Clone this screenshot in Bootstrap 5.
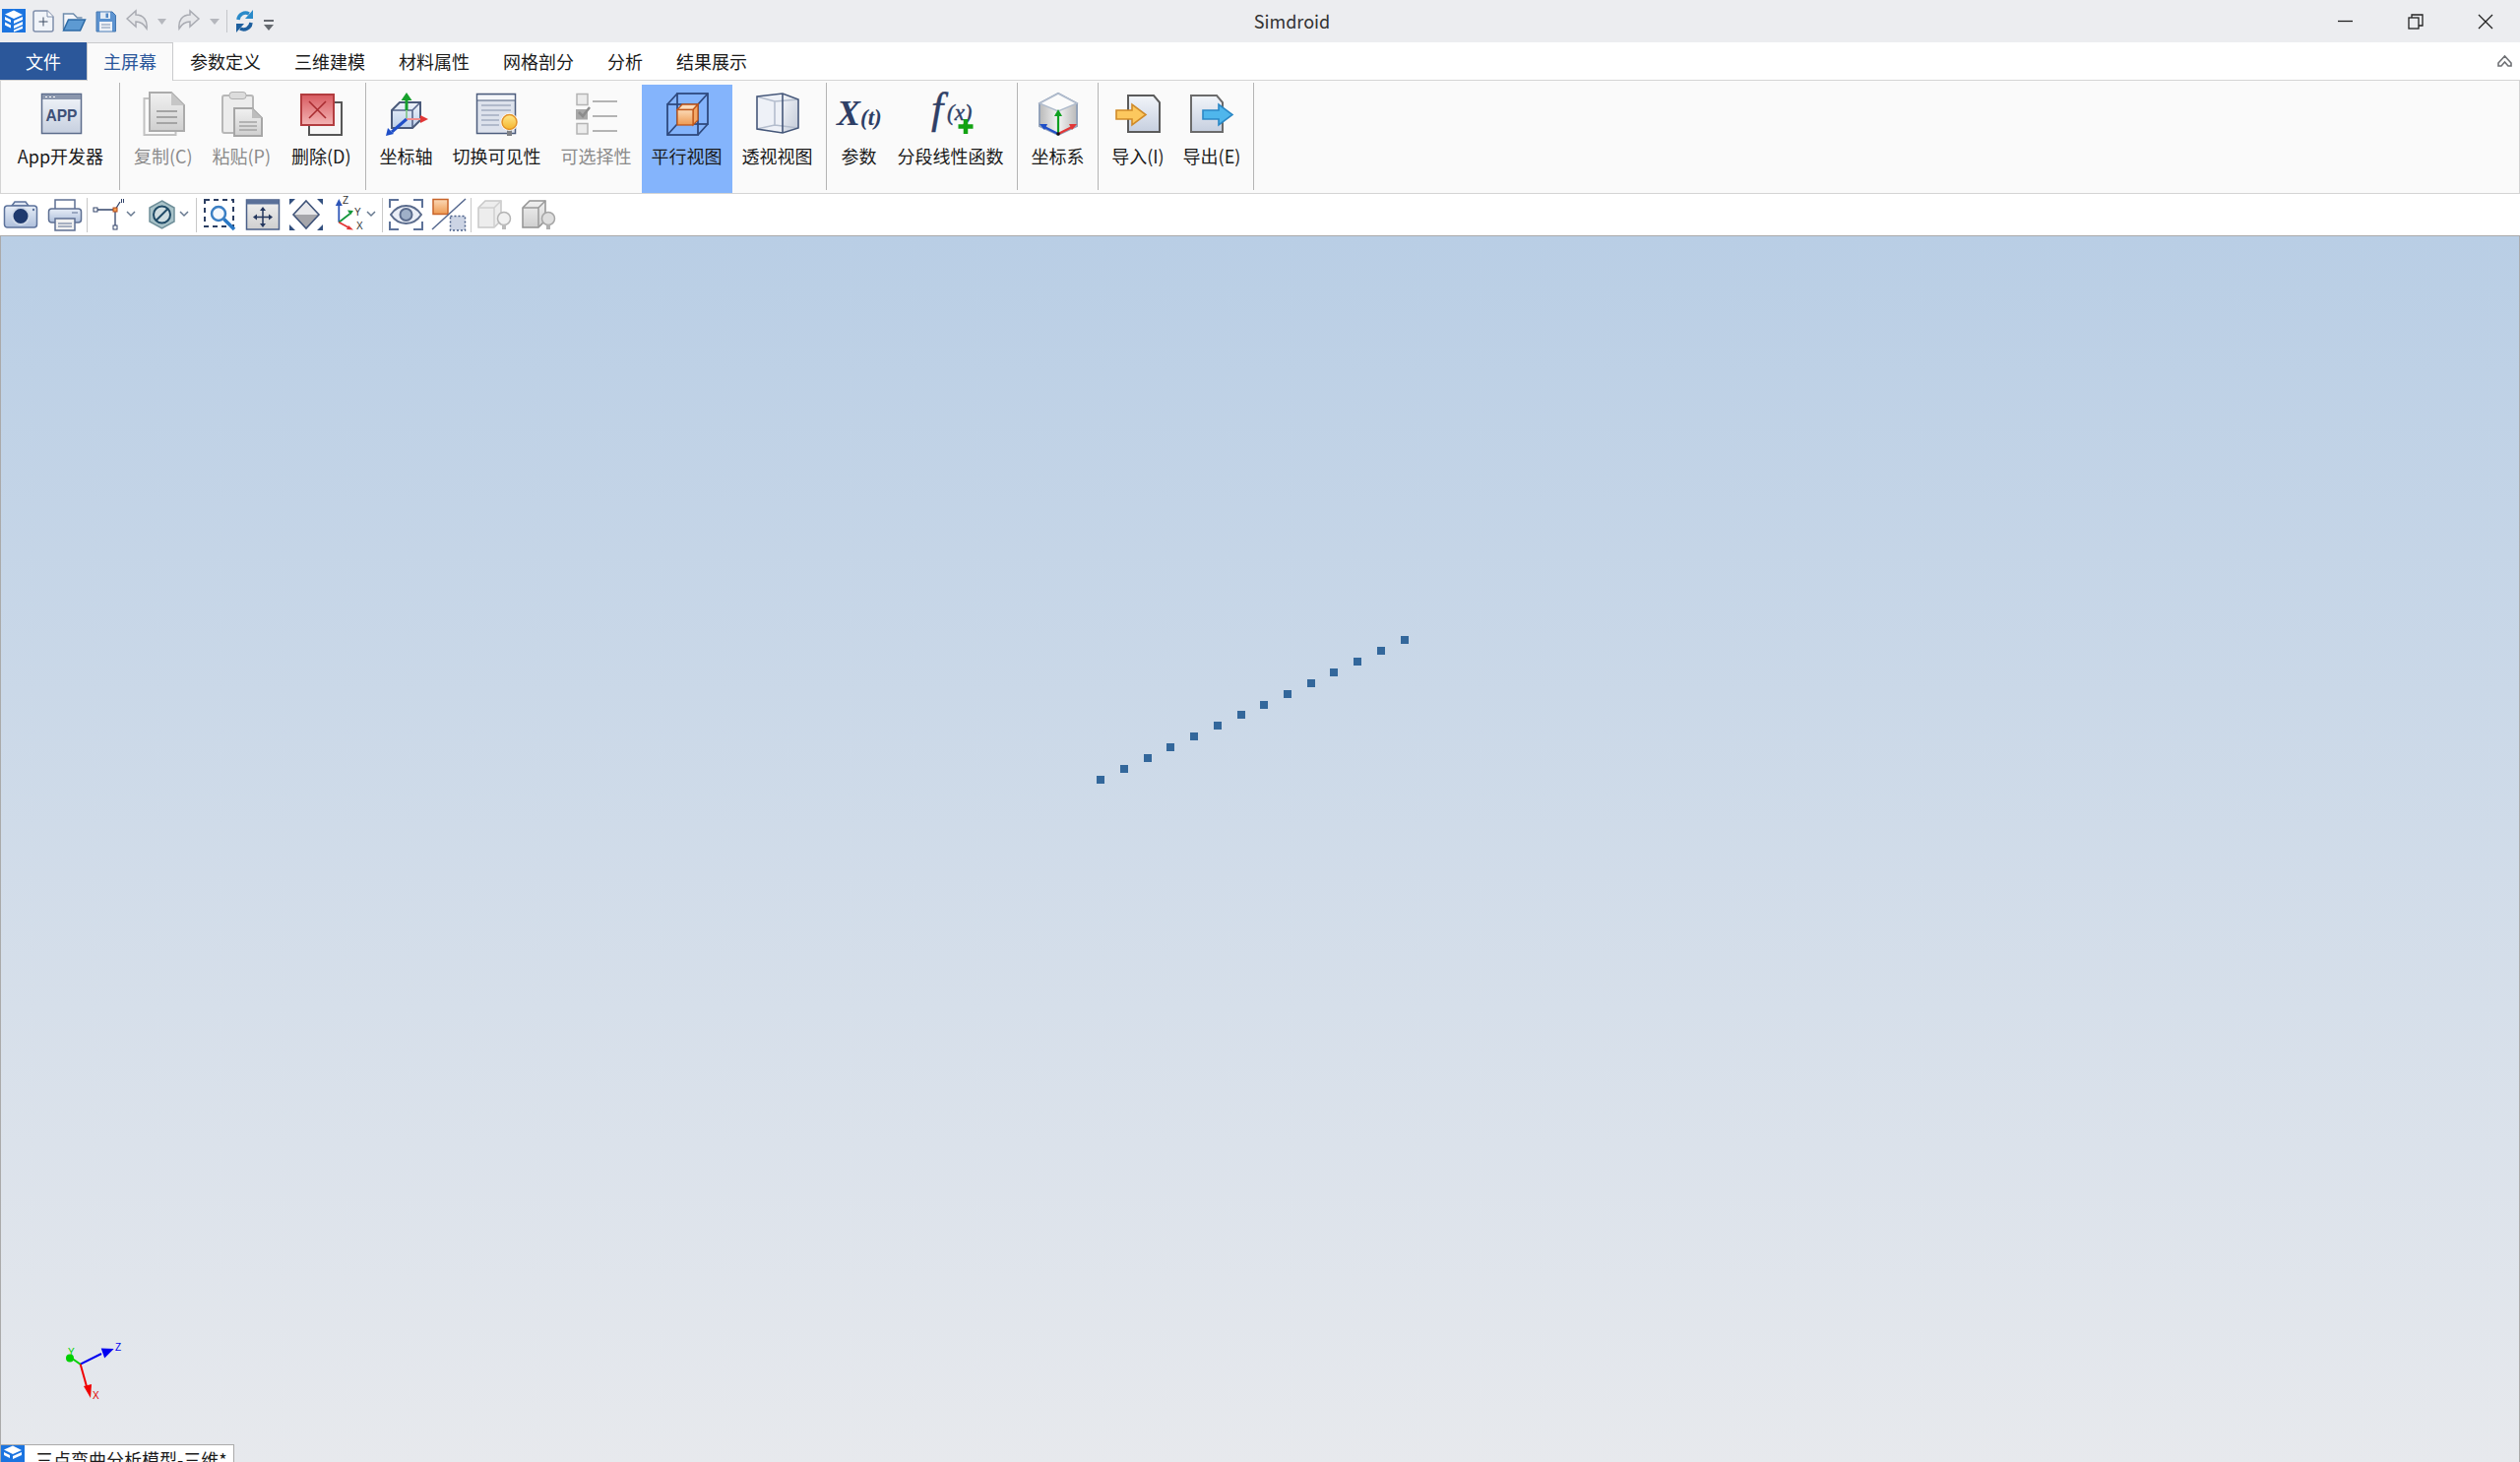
<!DOCTYPE html>
<html lang="zh-CN">
<head>
<meta charset="UTF-8" />
<title>Simdroid</title>
<link href="https://cdn.jsdelivr.net/npm/bootstrap@5.3.0/dist/css/bootstrap.min.css" rel="stylesheet" />
<style>
  html, body { height: 100%; }
  body { font-family: "Noto Sans CJK SC", "Noto Sans", sans-serif; font-size: 18px; color: #1a1a1a; overflow: hidden; background: #fff; }
  svg { display: block; flex: none; }
  .svg-defs { position: absolute; width: 0; height: 0; }

  .title-row { height: 43px; background: #ecedf0; }
  .title-text { line-height: 43px; font-size: 18px; color: #333; }
  .qa-sep { width: 1px; height: 23px; margin: 10px 8px 0 7px; background: #c4c6ca; }
  .win-btn { width: 71px; height: 43px; padding: 0; border: 0; border-radius: 0; }

  .tab-row { height: 38px; background: #fff; position: relative; z-index: 1; }
  .rb-tab .nav-link { height: 39px; line-height: 38px; padding: 0 17px; font-size: 18px; color: #1a1a1a; border: 1px solid transparent; border-width: 0 1px; margin: 0 -1px; }
  .rb-tab .nav-link.file-tab { width: 88px; padding: 0; margin: 0; border: 0; height: 38px; text-align: center; background: #2b579a; color: #fff; }
  .rb-tab .nav-link.active { background: #fafafa; color: #2b579a; border: 1px solid #c9cacc; border-bottom: 0; margin: 0; padding: 0 16px; height: 39px; line-height: 36px; }

  .rb-panel { height: 116px; padding: 4px 0 0 4px; background: #fafafa; border: 1px solid #d4d4d4; }
  .rb-sep { width: 1px; margin: -2px 4px 3px 3px; background: #b4b4b4; }
  .rb-btn { padding: 6px 10px 0; border: 0; border-radius: 0; font-size: 18px; line-height: 24px; color: #1a1a1a; white-space: nowrap; }
  .rb-btn svg { overflow: visible; }
  .rb-btn span { margin-top: 6px; }
  .rb-btn.rb-off { color: #8b8b8b; }
  .rb-btn.active { background: #84b4fc; color: #1a1a1a; }
  .rb-w113 { width: 113px; padding-left: 0; padding-right: 0; }
  .rb-w80 { width: 79.5px; padding-left: 0; padding-right: 0; }
  .rb-w82 { width: 82.5px; padding-left: 0; padding-right: 0; }
  .rb-w73 { width: 73px; padding-left: 0; padding-right: 0; }
  .rb-w77 { width: 77px; padding-left: 0; padding-right: 0; }
  .rb-w58 { width: 58px; padding-left: 0; padding-right: 0; }

  .tool-row { height: 42px; margin-left: -1px; background: #fff; }
  .tb-btn { width: 44.5px; height: 42px; padding: 0; border: 0; border-radius: 0; }
  .tb-drop { width: 55px; }
  .tb-drop2 { width: 54.5px; }
  .tb-sep { width: 1px; height: 35px; margin-top: 4px; background: #c8c8c8; }

  .view-area { position: relative; background: linear-gradient(#b9cee5, #e7e9ed); border: 1px solid #aaa; border-width: 1px 1px 0; }
  .view-dots { position: absolute; left: 1089px; top: 390px; }
  .view-triad { position: absolute; left: -1px; top: 1100px; }
  .doc-tab { width: 237px; height: 18px; overflow: hidden; background: #fff; border: 1px solid #aaa; border-bottom: 0; border-left: 0; line-height: 28px; white-space: nowrap; }
  .doc-tab svg { margin-top: -1px; }
  .doc-tab span { margin-left: 11px; }
</style>
</head>
<body class="d-flex flex-column">

<svg class="svg-defs">
  <defs>
    <linearGradient id="gLight" x1="0" y1="0" x2="0" y2="1"><stop offset="0" stop-color="#f2f5fa"/><stop offset="1" stop-color="#c6cfdf"/></linearGradient>
    <linearGradient id="gSide" x1="0" y1="0" x2="1" y2="1"><stop offset="0" stop-color="#f4f6fa"/><stop offset="1" stop-color="#c2cad8"/></linearGradient>
    <linearGradient id="gGray" x1="0" y1="0" x2="0" y2="1"><stop offset="0" stop-color="#f1f1f1"/><stop offset="1" stop-color="#cfcfcf"/></linearGradient>
    <linearGradient id="gRed" x1="0" y1="0" x2="0" y2="1"><stop offset="0" stop-color="#d85a60"/><stop offset="1" stop-color="#f3b4b4"/></linearGradient>
    <linearGradient id="gBulb" x1="0" y1="0" x2="0" y2="1"><stop offset="0" stop-color="#ffe88a"/><stop offset="1" stop-color="#f4b52e"/></linearGradient>
    <linearGradient id="gOrange" x1="0" y1="0" x2="0" y2="1"><stop offset="0" stop-color="#fbd9b6"/><stop offset="1" stop-color="#ee9a52"/></linearGradient>
    <linearGradient id="gCam" x1="0" y1="0" x2="0" y2="1"><stop offset="0" stop-color="#e6edf7"/><stop offset="1" stop-color="#aebfdb"/></linearGradient>
    <linearGradient id="gCube" x1="0" y1="0" x2="1" y2="0"><stop offset="0" stop-color="#b9b9b9"/><stop offset=".5" stop-color="#f4f4f4"/><stop offset="1" stop-color="#b9b9b9"/></linearGradient>
    <linearGradient id="gBox" x1="0" y1="0" x2="0" y2="1"><stop offset="0" stop-color="#eef3fa"/><stop offset="1" stop-color="#bcd0ea"/></linearGradient>
  </defs>
</svg>

<!-- title bar -->
<div class="title-row d-flex flex-none">
  <div class="d-flex">
    <svg width="33" height="43"><rect x="2" y="9" width="24" height="24" fill="#1b74e0"/><path d="M5 14.500L14 10.500l9 4.500-9 4zM14 21l9-4v3l-9 4zM14 26l9-4v3l-9 4zM14 30.500l9-4v2.500l-9 3.500zM5 17l6 3v3l-6-3zM5 22.500l6 3v3l-6-3z" fill="#fff"/></svg>
    <svg width="30" height="43"><path d="M1 13a2 2 0 0 1 2-2h12l6 6v13a2 2 0 0 1-2 2H3a2 2 0 0 1-2-2z" fill="#f1f4f9" stroke="#7f8eab" stroke-width="1.500"/><path d="M15 11v6h6" fill="#fff" stroke="#7f8eab"/><path d="M11 17.500v9M6.500 22h9" stroke="#3b4a63" stroke-width="1"/></svg>
    <svg width="34" height="43"><path d="M1.500 30V14h10l4 4h5" fill="#f4f6fa" stroke="#6f8dad" stroke-width="1.500"/><path d="M1.500 31l5-11h17l-5 11z" fill="#5d9ad2" stroke="#2c6aa5" stroke-width="1.500"/></svg>
    <svg width="31" height="43"><path d="M1 12h16l3.500 3.500V32H1z" fill="#5d93d0" stroke="#4577b0"/><rect x="5" y="12.500" width="10" height="6.500" fill="#e3ebf5"/><rect x="10.500" y="13.500" width="2.500" height="4.500" fill="#4f86c4"/><rect x="4" y="22" width="13" height="9.500" fill="#edf1f7"/><path d="M6 25h9M6 28h9" stroke="#7f93b0"/></svg>
    <svg width="32" height="43"><path d="M1 19l9-8v4c8 0 12 6 11 14-3-5-6-7-11-7v5z" fill="#e6e7ea" stroke="#a9abb2" stroke-width="1.500"/></svg>
    <svg width="21" height="43"><path d="M0 19h9l-4.500 6z" fill="#b5b7bd"/></svg>
    <svg width="32" height="43"><path d="M21 19l-9-8v4c-8 0-12 6-11 14 3-5 6-7 11-7v5z" fill="#e6e7ea" stroke="#a9abb2" stroke-width="1.500"/></svg>
    <svg width="10" height="43"><path d="M0 19h10l-5 6z" fill="#b5b7bd"/></svg>
    <div class="qa-sep"></div>
    <svg width="29" height="43"><g fill="none" stroke-width="3.500"><path d="M3 20a7.500 7.500 0 0 1 11-6" stroke="#2a8ac9"/><path d="M16 23a7.500 7.500 0 0 1-11 6" stroke="#1d5f9e"/></g><path d="M18 10v9h-8z" fill="#2a8ac9"/><path d="M1 33v-9h8z" fill="#1d5f9e"/></svg>
    <svg width="10" height="43"><path d="M0 20h10v2H0zM0 25h10l-5 6z" fill="#666a70"/></svg>
  </div>
  <div class="title-text flex-grow-1 text-center">Simdroid</div>
  <div class="d-flex">
    <button class="btn win-btn d-flex align-items-center justify-content-center"><svg width="16" height="16"><path d="M0 7.500h15" stroke="#222" stroke-width="1.300"/></svg></button>
    <button class="btn win-btn d-flex align-items-center justify-content-center"><svg width="16" height="16"><rect x="1" y="4" width="10" height="11" fill="none" stroke="#222" stroke-width="1.300"/><path d="M4 4V1h11v11h-4" fill="none" stroke="#222" stroke-width="1.300"/></svg></button>
    <button class="btn win-btn d-flex align-items-center justify-content-center"><svg width="16" height="16"><path d="M1 1l14 14M15 1L1 15" stroke="#222" stroke-width="1.300"/></svg></button>
  </div>
</div>

<!-- ribbon tabs -->
<div class="tab-row d-flex flex-none">
  <ul class="nav rb-tab flex-nowrap">
    <li class="nav-item"><a class="nav-link file-tab" href="#">文件</a></li>
    <li class="nav-item"><a class="nav-link active" href="#">主屏幕</a></li>
    <li class="nav-item"><a class="nav-link" href="#">参数定义</a></li>
    <li class="nav-item"><a class="nav-link" href="#">三维建模</a></li>
    <li class="nav-item"><a class="nav-link" href="#">材料属性</a></li>
    <li class="nav-item"><a class="nav-link" href="#">网格剖分</a></li>
    <li class="nav-item"><a class="nav-link" href="#">分析</a></li>
    <li class="nav-item"><a class="nav-link" href="#">结果展示</a></li>
  </ul>
  <svg class="ms-auto me-2" width="15" height="38"><path d="M1 21l6.500-7L14 21v3h-3l-3.500-4L4 24H1z" fill="#fff" stroke="#6e7074" stroke-width="1.600"/></svg>
</div>

<!-- ribbon panel -->
<div class="rb-panel d-flex flex-none">
  <button class="btn rb-btn rb-w113 d-flex flex-column align-items-center">
    <svg width="48" height="48"><rect x="4.500" y="3.500" width="40" height="40" fill="url(#gLight)" stroke="#5d6d8c" stroke-width="1.500"/><rect x="5" y="4" width="39" height="5" fill="#8a96ad"/><path d="M8 6.500h2M12 6.500h2M16 6.500h2" stroke="#fff"/><text x="24.500" y="31" text-anchor="middle" font-family="Liberation Sans" font-weight="700" font-size="17" fill="#3f5178" textLength="32" lengthAdjust="spacingAndGlyphs">APP</text></svg>
    <span>App开发器</span>
  </button>
  <div class="rb-sep"></div>
  <button class="btn rb-btn rb-off rb-w80 d-flex flex-column align-items-center">
    <svg width="48" height="48"><rect x="4.500" y="8" width="32" height="37" fill="#fafafa" stroke="#c2c2c2" stroke-width="2"/><path d="M10 2h22l13 13v26H10z" fill="url(#gGray)" stroke="#ababab" stroke-width="2"/><path d="M32 2v13h13z" fill="#c6c6c6"/><path d="M17 21h21M17 27h21M17 33h21" stroke="#a4a4a4" stroke-width="2"/></svg>
    <span>复制(C)</span>
  </button>
  <button class="btn rb-btn rb-off rb-w80 d-flex flex-column align-items-center">
    <svg width="48" height="48"><rect x="5" y="5" width="31" height="38" rx="2" fill="#ececec" stroke="#b7b7b7" stroke-width="2"/><rect x="12" y="1.500" width="17" height="7" rx="3" fill="#dcdcdc" stroke="#b0b0b0"/><path d="M17 18h18l10 10v18H17z" fill="url(#gGray)" stroke="#a6a6a6" stroke-width="2"/><path d="M35 18v10h10z" fill="#bdbdbd"/><path d="M22 32h18M22 36h18M22 40h18" stroke="#a4a4a4" stroke-width="1.500"/></svg>
    <span>粘贴(P)</span>
  </button>
  <button class="btn rb-btn rb-w82 d-flex flex-column align-items-center">
    <svg width="48" height="48"><rect x="12" y="12" width="33" height="33" fill="#f6f6f6" stroke="#565656" stroke-width="2"/><rect x="4" y="4" width="33" height="31" fill="url(#gRed)" stroke="#b23c3f" stroke-width="2"/><path d="M12 11l17 17M29 11L12 28" stroke="#a82c30" stroke-width="1.600"/></svg>
    <span>删除(D)</span>
  </button>
  <div class="rb-sep"></div>
  <button class="btn rb-btn d-flex flex-column align-items-center">
    <svg width="48" height="48"><path d="M17 12h21v18l-8 8H9V20z" fill="url(#gBox)"/><path d="M9 20h21v18M30 20l8-8" fill="none" stroke="#55658a" stroke-width="1.600"/><path d="M24 29L9 38M24 29h14M24 12v17" fill="none" stroke="#c5cfe0" stroke-width="1"/><path d="M17 12h21v18l-8 8H9V20z" fill="none" stroke="#4a5a7a" stroke-width="2"/><path d="M24 20V9" stroke="#16a02c" stroke-width="3"/><path d="M24 20v8" stroke="#8fc99a" stroke-width="2"/><path d="M24 2l5.500 8h-11z" fill="#16a02c"/><path d="M24 29h15" stroke="#ee8f8f" stroke-width="2"/><path d="M46 29l-8-4v8z" fill="#e23636"/><path d="M24 29L9 42" stroke="#1f4fc8" stroke-width="3"/><path d="M3 46l2-8 6 6z" fill="#1f4fc8"/></svg>
    <span>坐标轴</span>
  </button>
  <button class="btn rb-btn d-flex flex-column align-items-center">
    <svg width="48" height="48"><rect x="3.500" y="3.500" width="39" height="40" fill="#dde2ec" stroke="#4d5d7d" stroke-width="1.500"/><rect x="4.500" y="5" width="37" height="5" fill="#f5f7fa"/><path d="M4 10h38" stroke="#4d5d7d" stroke-width="1.200"/><path d="M8 15h30M8 20h30M8 25h18M8 30h18M8 35h18" stroke="#a3adc0" stroke-width="1.500"/><rect x="34" y="38" width="5" height="8" fill="#7e8085"/><circle cx="36.500" cy="32" r="9" fill="#fff"/><circle cx="36.500" cy="32" r="7.500" fill="url(#gBulb)" stroke="#e39228" stroke-width="1.500"/></svg>
    <span>切换可见性</span>
  </button>
  <button class="btn rb-btn rb-off d-flex flex-column align-items-center">
    <svg width="48" height="48"><rect x="4" y="3.500" width="11" height="11" fill="#ececec" stroke="#b4b4b4" stroke-width="1.500"/><path d="M20 11h25M20 26h25M20 41h25" stroke="#b4b4b4" stroke-width="2"/><rect x="3" y="19" width="12" height="10.500" fill="#a8a8a8"/><path d="M6 22l4 4 7-9" fill="none" stroke="#8c8c8c" stroke-width="2.500"/><rect x="4" y="33.500" width="11" height="10.500" fill="#ececec" stroke="#b4b4b4" stroke-width="1.500"/></svg>
    <span>可选择性</span>
  </button>
  <button class="btn rb-btn active d-flex flex-column align-items-center">
    <svg width="48" height="48"><g fill="none" stroke="#2f4a7f" stroke-width="1.800"><rect x="14" y="3" width="31" height="31"/><rect x="4" y="14" width="31" height="31"/><path d="M14 3L4 14M45 3L35 14M45 34L35 45M14 34L4 45"/></g><path d="M19 14h16l-5 5.500H14z" fill="#fbdcbc" stroke="#c0561a" stroke-width="1.300"/><path d="M35 14v16l-5 5V19.500z" fill="#f4a868" stroke="#c0561a" stroke-width="1.300"/><rect x="14" y="19.500" width="16" height="15.500" fill="url(#gOrange)" stroke="#c0561a" stroke-width="1.300"/></svg>
    <span>平行视图</span>
  </button>
  <button class="btn rb-btn d-flex flex-column align-items-center">
    <svg width="48" height="48"><path d="M3 6l26-3v40L3 39z" fill="#eef1f7"/><path d="M29 3l16 6v29l-16 5z" fill="url(#gSide)"/><path d="M3 6l18 5 24-2M3 39l18-4 24 3M21 11v24" fill="none" stroke="#b4bdcd" stroke-width="1.600"/><path d="M3 6l26-3 16 6v29l-16 5-26-4zM29 3v40" fill="none" stroke="#46587a" stroke-width="1.600"/></svg>
    <span>透视视图</span>
  </button>
  <div class="rb-sep"></div>
  <button class="btn rb-btn rb-w58 d-flex flex-column align-items-center">
    <svg width="48" height="48"><text x="1" y="35" font-family="Liberation Serif" font-style="italic" font-weight="700" fill="#2f3f66"><tspan font-size="36">X</tspan><tspan font-size="23">(t)</tspan></text></svg>
    <span>参数</span>
  </button>
  <button class="btn rb-btn d-flex flex-column align-items-center">
    <svg width="48" height="48"><g font-family="Liberation Serif" font-style="italic" fill="#2f3f66" stroke="#2f3f66" stroke-width=".4"><text x="4" y="33" font-size="44">f</text><text x="20" y="30" font-size="23">(x)</text></g><path d="M39 29v15M31.500 36.500h15" stroke="#13a313" stroke-width="4.500"/></svg>
    <span>分段线性函数</span>
  </button>
  <div class="rb-sep"></div>
  <button class="btn rb-btn d-flex flex-column align-items-center">
    <svg width="48" height="48"><path d="M24 3l19 10v23L24 45 5 36V13z" fill="url(#gCube)" stroke="#93a2b9" stroke-width="2"/><path d="M24 3l19 10-19 8L5 13z" fill="#fbfbfb" stroke="#b0bccd" stroke-width="1.500"/><path d="M24 44V24" stroke="#10a020" stroke-width="2.200"/><path d="M24 19l4 7h-8z" fill="#10a020"/><path d="M24 44l-14-7" stroke="#1f4fc8" stroke-width="2.200"/><path d="M5 34l8 0-3 6z" fill="#1f4fc8"/><path d="M24 44l14-7" stroke="#e23636" stroke-width="2.200"/><path d="M43 34l-8 0 3 6z" fill="#e23636"/><circle cx="24" cy="44" r="1.800" fill="#111"/></svg>
    <span>坐标系</span>
  </button>
  <div class="rb-sep"></div>
  <button class="btn rb-btn rb-w73 d-flex flex-column align-items-center">
    <svg width="48" height="48"><path d="M14 5h26l6 7v30H14z" fill="url(#gLight)" stroke="#5b5b5b" stroke-width="2"/><path d="M2 20h16v-6l14 10.500L18 35v-6H2z" fill="#fcc85e" stroke="#d08a28" stroke-width="1.600"/></svg>
    <span>导入(I)</span>
  </button>
  <button class="btn rb-btn rb-w77 d-flex flex-column align-items-center">
    <svg width="48" height="48"><path d="M3 5h26l6 7v30H3z" fill="url(#gLight)" stroke="#6b6b6b" stroke-width="2"/><path d="M15 20h16v-6l14 10.500L31 35v-6H15z" fill="#4fb6ec" stroke="#2b88c6" stroke-width="1.600"/></svg>
    <span>导出(E)</span>
  </button>
  <div class="rb-sep"></div>
</div>

<!-- view toolbar -->
<div class="tool-row d-flex flex-none">
  <button class="btn tb-btn d-flex justify-content-center"><svg width="40" height="42"><path d="M11 12l3-4h11l3 4z" fill="#dfe7f3" stroke="#5d739c" stroke-width="1.500"/><rect x="3.500" y="12" width="33" height="22" rx="3" fill="url(#gCam)" stroke="#5d739c" stroke-width="1.500"/><circle cx="20" cy="22.500" r="8.500" fill="#1f3a6e" stroke="#cfd9e9" stroke-width="2"/><circle cx="33" cy="16" r="1.200" fill="#5d739c"/></svg></button>
  <button class="btn tb-btn d-flex justify-content-center"><svg width="40" height="42"><rect x="10" y="6" width="20" height="11" fill="#fff" stroke="#5d6f92" stroke-width="1.500"/><rect x="3.500" y="15" width="33" height="14" rx="3" fill="url(#gCam)" stroke="#5d6f92" stroke-width="1.500"/><rect x="10" y="25" width="20" height="12" fill="#f0f0f0" stroke="#5d6f92" stroke-width="1.500"/><path d="M13 30h14M13 33h14" stroke="#5d6f92"/><path d="M27 19h6" stroke="#5d6f92"/></svg></button>
  <div class="tb-sep"></div>
  <button class="btn tb-btn tb-drop"><svg width="55" height="42"><path d="M8 16h20v18M28 16l5-8" fill="none" stroke="#33456b" stroke-width="1.300"/><rect x="6" y="14" width="4" height="4" fill="#fff" stroke="#33456b"/><rect x="26" y="32" width="4" height="4" fill="#fff" stroke="#33456b"/><rect x="26" y="14" width="4" height="4" fill="#f6a04e" stroke="#b0491c"/><path d="M34.500 5v4M36.500 5v4" stroke="#33456b"/><path d="M40 18l4 4 4-4" fill="none" stroke="#66788f" stroke-width="1.500"/></svg></button>
  <button class="btn tb-btn tb-drop"><svg width="55" height="42"><path d="M20.500 7L33 14v14l-12.500 7L8 28V14z" fill="#a9c3c9" stroke="#6f8f99" stroke-width="1.500"/><circle cx="20.500" cy="21" r="8.500" fill="#cfdde0" stroke="#1f4a66" stroke-width="2"/><path d="M14.500 27l12-12" stroke="#1f4a66" stroke-width="2"/><path d="M39 18l4 4 4-4" fill="none" stroke="#66788f" stroke-width="1.500"/></svg></button>
  <div class="tb-sep"></div>
  <button class="btn tb-btn d-flex justify-content-center"><svg width="40" height="42"><rect x="6" y="6" width="29" height="27" fill="none" stroke="#2c3f63" stroke-width="2" stroke-dasharray="5 4"/><circle cx="20" cy="20" r="7" fill="#f4f8fd" stroke="#3b7fc4" stroke-width="2.500"/><path d="M25.500 25.500L36 36" stroke="#2a78c5" stroke-width="3.500"/></svg></button>
  <button class="btn tb-btn d-flex justify-content-center"><svg width="40" height="42"><rect x="3.500" y="6" width="33" height="30" fill="url(#gGray)" stroke="#4a5f88" stroke-width="1.500"/><rect x="3.500" y="6" width="33" height="4.500" fill="#5a7099"/><path d="M20 16v15M12.500 23.500h15" stroke="#24375e" stroke-width="1.500"/><path d="M20 13l3 4h-6zM20 34l3-4h-6zM10 23.500l4-3v6zM30 23.500l-4-3v6z" fill="#24375e"/></svg></button>
  <button class="btn tb-btn d-flex justify-content-center"><svg width="40" height="42"><path d="M20 7l13 14H7z" fill="#e8e8ea"/><path d="M20 35l13-14H7z" fill="#a6a6aa"/><path d="M20 7l13 14-13 14L7 21z" fill="none" stroke="#3f5378" stroke-width="1.600"/><g fill="#33507f"><path d="M3 5l6 0-6 6zM37 5l-6 0 6 6zM3 37l6 0-6-6zM37 37l-6 0 6-6z"/></g></svg></button>
  <button class="btn tb-btn tb-drop2"><svg width="54" height="42"><path d="M10.300 28.700V11" stroke="#2d55b8" stroke-width="1.800"/><path d="M10.300 5l3.500 7h-7z" fill="#2d55b8"/><path d="M10.300 28.700l11-8.500" stroke="#12963a" stroke-width="1.800"/><path d="M25 17l-6-.500 3 5z" fill="#12963a"/><path d="M10.300 28.700l11 6" stroke="#e23636" stroke-width="1.800"/><path d="M25 36.500l-7-.500 2-4z" fill="#e23636"/><g font-family="Liberation Sans" font-size="10" fill="#333"><text x="14" y="10">Z</text><text x="26" y="22">Y</text><text x="28" y="36">X</text></g><path d="M39 18l4 4 4-4" fill="none" stroke="#66788f" stroke-width="1.500"/></svg></button>
  <div class="tb-sep"></div>
  <button class="btn tb-btn d-flex justify-content-center"><svg width="40" height="42"><path d="M5 14V6h9M29 6h9v8M5 28v8h9M29 36h9v-8" fill="none" stroke="#5d7299" stroke-width="2"/><path d="M6 21c8-12 23-12 31 0-8 12-23 12-31 0z" fill="#eaeef6" stroke="#5a6b8c" stroke-width="2"/><circle cx="21.500" cy="21" r="6" fill="#9fb0c8" stroke="#5a6b8c" stroke-width="2"/></svg></button>
  <button class="btn tb-btn d-flex justify-content-center"><svg width="40" height="42"><rect x="4" y="5.500" width="15" height="15" fill="url(#gOrange)" stroke="#c8642a" stroke-width="1.500"/><rect x="21.500" y="22.500" width="15" height="14.500" fill="#ccd4e4" stroke="#4a5f88" stroke-width="1.500" stroke-dasharray="2 2"/><path d="M3 36L37 5" stroke="#55688f" stroke-width="1.500"/></svg></button>
  <div class="tb-sep"></div>
  <button class="btn tb-btn d-flex justify-content-center"><svg width="40" height="42"><path d="M5 14l7-7h16v20l-7 7H5z" fill="#ededed" stroke="#c8c8c8" stroke-width="1.500"/><path d="M5 14h16v20M21 14l7-7" fill="none" stroke="#d0d0d0" stroke-width="1.500"/><circle cx="31" cy="25" r="6.500" fill="#f1f1f1" stroke="#b4b4b4" stroke-width="1.500"/><rect x="29" y="31" width="4" height="5" fill="#bcbcbc"/></svg></button>
  <button class="btn tb-btn d-flex justify-content-center"><svg width="40" height="42"><path d="M5 14l7-7h16v20l-7 7H5z" fill="url(#gGray)" stroke="#929292" stroke-width="1.500"/><path d="M5 14h16v20M21 14l7-7" fill="none" stroke="#9a9a9a" stroke-width="1.500"/><circle cx="31" cy="25" r="6.500" fill="#dedede" stroke="#a6a6a6" stroke-width="1.500"/><rect x="29" y="31" width="4" height="5" fill="#b0b0b0"/></svg></button>
</div>

<!-- 3d view -->
<div class="view-area flex-grow-1 d-flex flex-column justify-content-end">
  <svg class="view-dots" width="360" height="180" fill="#33679b">
    <rect x="24" y="158" width="8" height="8"/><rect x="48" y="147" width="8" height="8"/>
    <rect x="72" y="136" width="8" height="8"/><rect x="95" y="125" width="8" height="8"/>
    <rect x="119" y="114" width="8" height="8"/><rect x="143" y="103" width="8" height="8"/>
    <rect x="167" y="92" width="8" height="8"/><rect x="190" y="82" width="8" height="8"/>
    <rect x="214" y="71" width="8" height="8"/><rect x="238" y="60" width="8" height="8"/>
    <rect x="261" y="49" width="8" height="8"/><rect x="285" y="38" width="8" height="8"/>
    <rect x="309" y="27" width="8" height="8"/><rect x="333" y="16" width="8" height="8"/>
  </svg>
  <svg class="view-triad" width="140" height="100">
    <path d="M81.700 45.700L103 35" stroke="#0000f0" stroke-width="2"/><path d="M115.700 30l-13-.500 3.500 10z" fill="#0000f0"/>
    <path d="M81.700 45.700L72 39" stroke="#00d000" stroke-width="2"/><circle cx="71" cy="39.500" r="4" fill="#00d000"/>
    <path d="M81.700 45.700L88.500 70" stroke="#f00000" stroke-width="2"/><path d="M92 80l-7-12 8-2z" fill="#f00000"/>
    <g font-family="Liberation Sans" font-size="10"><text x="117" y="32" fill="#0000f0">Z</text><text x="69" y="37" fill="#00d000">Y</text><text x="94" y="81" fill="#e00000">X</text></g>
  </svg>
  <div class="doc-tab d-flex">
    <svg width="24" height="24"><rect width="24" height="24" fill="#1b74e0"/><path d="M3 5.500L12 1.500l9 4.500-9 4zM12 12l9-4v3l-9 4zM3 8l6 3v3l-6-3z" fill="#fff"/></svg>
    <span>三点弯曲分析模型-三维*</span>
  </div>
</div>

</body>
</html>
